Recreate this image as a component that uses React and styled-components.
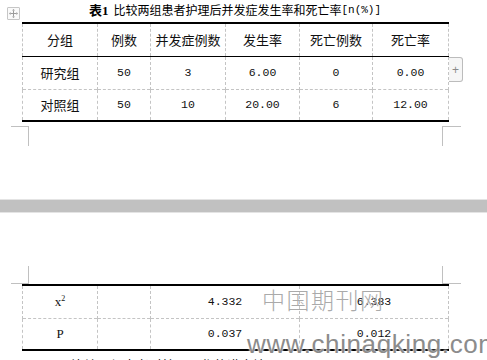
import React from 'react';
import styled, { createGlobalStyle } from 'styled-components';

const GlobalStyle = createGlobalStyle`
  html, body {
    margin: 0;
    padding: 0;
    background: #fff;
  }
  body {
    font-family: "Noto Sans CJK SC", "Noto Sans", sans-serif;
    color: #000;
  }
`

const Page = styled.div`
  position: relative;
  width: 487px;
  height: 360px;
  overflow: hidden;
  background: #fff;
`

const Caption = styled.div`
  width: 426px;
  height: 22px;
  margin-left: 22px;
  display: flex;
  align-items: center;
  justify-content: center;
  font-size: 12px;
  line-height: 1;
  padding-bottom: 2px;
  box-sizing: border-box;
`
const CaptionBold = styled.b`
  font-family: "Liberation Serif", "Noto Sans CJK SC", serif;
  font-size: 13px;
  margin-right: 5px;
`
const CaptionMono = styled.span`
  font-family: "Liberation Mono", monospace;
  font-size: 11px;
`

const TableWrap = styled.div`
  position: relative;
  width: 426px;
  margin-left: 22px;
`

const Table = styled.table`
  width: 426px;
  border-collapse: collapse;
  table-layout: fixed;
  border-top: 2px solid #000;
  border-bottom: 2px solid #000;
`

const Row = styled.tr`
  height: ${p => p.$h || 33}px;
  border-bottom: ${p => (p.$head ? '1px solid #000' : '1px dashed #c4c4c4')};
  &:last-child {
    border-bottom: 2px solid #000;
  }
`

const Cell = styled.td`
  border-left: 1px dashed #c4c4c4;
  border-right: 1px dashed #c4c4c4;
  padding: 0;
  text-align: center;
  vertical-align: middle;
  line-height: 16px;
  font-size: ${p => (p.$num ? '11.5px' : '13px')};
  font-family: ${p => (p.$num
    ? '"Liberation Mono", "DejaVu Sans Mono", monospace'
    : '"Noto Sans CJK SC", sans-serif')};
  color: #111;
`

const Chi = styled.span`
  font-family: "Liberation Serif", serif;
  font-size: 13px;
  sup {
    font-size: 8px;
    line-height: 0;
    vertical-align: 5px;
  }
`

const MoveHandle = styled.div`
  position: absolute;
  left: 7px;
  top: 7px;
  width: 13px;
  height: 13px;
  box-sizing: border-box;
  border: 1px solid #c6c6c6;
  border-radius: 1px;
  background: #fafafa;
  display: flex;
  align-items: center;
  justify-content: center;
`

const PlusTab = styled.div`
  position: absolute;
  left: 427px;
  top: 35px;
  width: 14px;
  height: 25px;
  box-sizing: border-box;
  border: 1px solid #bcbcbc;
  border-left: none;
  border-radius: 0 3px 3px 0;
  background: #f6f6f6;
  color: #8a8a8a;
  font-family: "Liberation Sans", sans-serif;
  font-size: 12px;
  display: flex;
  align-items: center;
  justify-content: center;
`

const MarkRow = styled.div`
  display: flex;
  justify-content: space-between;
  padding: 0 26px 0 11px;
  margin-top: ${p => p.$top || 0}px;
`

const Mark = styled.div`
  width: ${p => p.$w}px;
  height: ${p => p.$h}px;
  box-sizing: border-box;
  border-color: #c0c0c0;
  border-style: solid;
  border-width: ${p => p.$edges};
`

const Band = styled.div`
  margin-top: 53px;
  height: 14px;
  box-sizing: border-box;
  background: #c1c1c1;
  border-top: 1px solid #e4e4e4;
  border-bottom: 1px solid #e4e4e4;
`

const SubHead = styled.div`
  margin: 6px 0 0 50px;
  font-size: 13px;
  line-height: 16px;
  color: #111;
`

const WatermarkCn = styled.div`
  position: absolute;
  left: 262px;
  top: 284px;
  font-size: 23px;
  letter-spacing: 1.5px;
  font-weight: 300;
  color: #aaaaaa;
  line-height: 30px;
`

const WatermarkUrl = styled.div`
  position: absolute;
  left: 247px;
  top: 329px;
  font-family: "Liberation Sans", sans-serif;
  font-size: 26px;
  letter-spacing: 0.6px;
  color: #8c8c8c;
  line-height: 30px;
  text-shadow: 0 0 2px #fff, 0 0 2px #fff;
`

const topCols = [75, 53, 75, 74, 73, 76];
const topHead = ['分组', '例数', '并发症例数', '发生率', '死亡例数', '死亡率'];
const topRows = [
  ['研究组', '50', '3', '6.00', '0', '0.00'],
  ['对照组', '50', '10', '20.00', '6', '12.00'],
];
const bottomCols = [75, 53, 149, 149];

function MoveIcon() {
  return (
    <svg width="9" height="9" viewBox="0 0 9 9" fill="#9a9a9a">
      <path d="M4.5 0 L6 1.6 H3 Z M4.5 9 L3 7.4 H6 Z M0 4.5 L1.6 3 V6 Z M9 4.5 L7.4 6 V3 Z" />
      <rect x="4" y="1.5" width="1" height="6" />
      <rect x="1.5" y="4" width="6" height="1" />
    </svg>
  );
}

class App extends React.Component {
  render() {
    return (
      <Page>
        <GlobalStyle />
        <MoveHandle><MoveIcon /></MoveHandle>
        <Caption>
          <CaptionBold>表1</CaptionBold>比较两组患者护理后并发症发生率和死亡率<CaptionMono>[n(%)]</CaptionMono>
        </Caption>
        <TableWrap>
          <Table>
            <colgroup>
              {topCols.map((w, i) => <col key={i} style={{ width: w }} />)}
            </colgroup>
            <tbody>
              <Row $head $h={33}>
                {topHead.map(h => <Cell key={h}>{h}</Cell>)}
              </Row>
              {topRows.map((r, ri) => (
                <Row key={r[0]} $h={ri === 0 ? 33 : 32}>
                  {r.map((v, i) => <Cell key={i} $num={i > 0}>{v}</Cell>)}
                </Row>
              ))}
            </tbody>
          </Table>
          <PlusTab>+</PlusTab>
        </TableWrap>
        <MarkRow $top={4}>
          <Mark $w={18} $h={20} $edges="1px 1px 0 0" />
          <Mark $w={19} $h={20} $edges="1px 0 0 1px" />
        </MarkRow>
        <Band />
        <MarkRow $top={53}>
          <Mark $w={18} $h={18} $edges="0 1px 1px 0" />
          <Mark $w={19} $h={18} $edges="0 0 1px 1px" />
        </MarkRow>
        <TableWrap>
          <Table>
            <colgroup>
              {bottomCols.map((w, i) => <col key={i} style={{ width: w }} />)}
            </colgroup>
            <tbody>
              <Row $h={33}>
                <Cell><Chi>x<sup>2</sup></Chi></Cell>
                <Cell />
                <Cell $num>4.332</Cell>
                <Cell $num>6.383</Cell>
              </Row>
              <Row $h={32}>
                <Cell><Chi>P</Chi></Cell>
                <Cell />
                <Cell $num>0.037</Cell>
                <Cell $num>0.012</Cell>
              </Row>
            </tbody>
          </Table>
        </TableWrap>
        <SubHead>2.2 比较两组患者对护理工作的满意情况</SubHead>
        <WatermarkCn>中国期刊网</WatermarkCn>
        <WatermarkUrl>www.chinaqking.com</WatermarkUrl>
      </Page>
    );
  }
}

export default App;
